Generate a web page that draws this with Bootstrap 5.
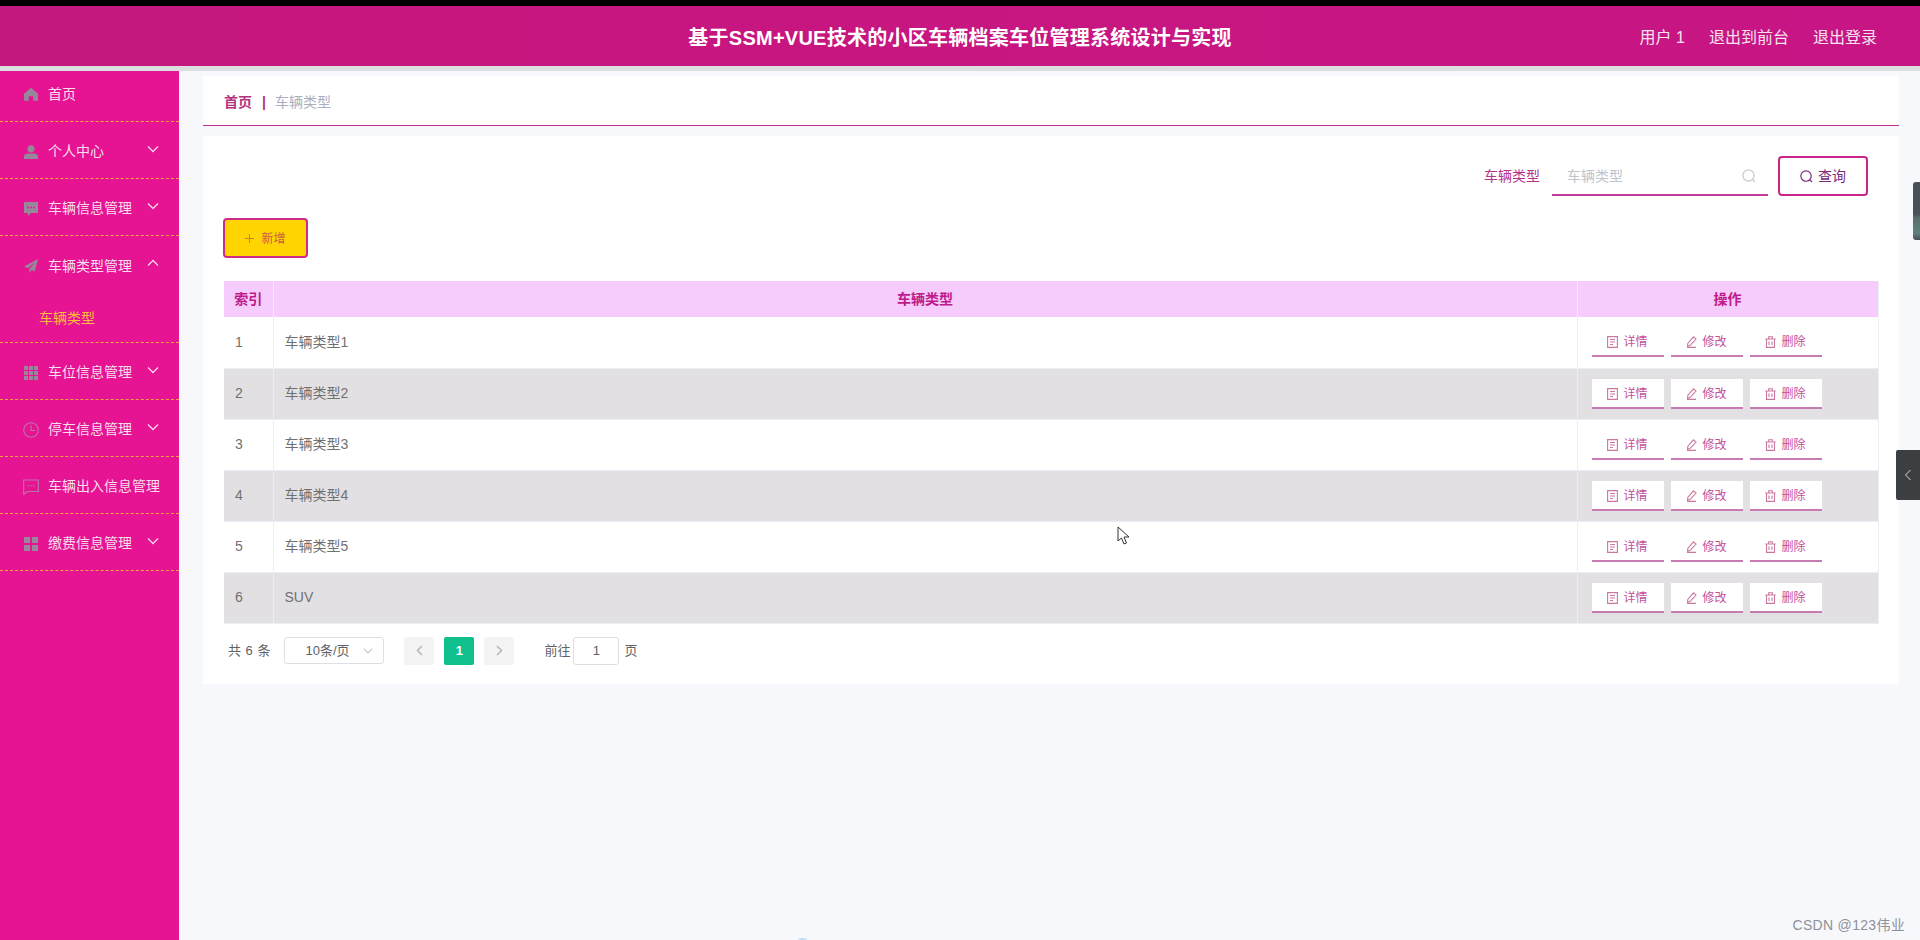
<!DOCTYPE html>
<html lang="zh">
<head>
<meta charset="utf-8">
<title>小区车辆档案车位管理系统</title>
<link href="https://cdn.jsdelivr.net/npm/bootstrap@5.3.0/dist/css/bootstrap.min.css" rel="stylesheet">
<style>
html,body{height:940px;overflow:hidden}
body{background:#f6f8fc;font-family:"Liberation Sans","Noto Sans CJK SC",sans-serif;color:#606266;position:relative}
.top-black{height:6px;background:#000}
.top-head{height:60px;background:linear-gradient(90deg,#c2187e 0,#c8167f 20%,#c71585 100%);color:#fff}
.head-side{flex:1 1 0}
.head-title{font-size:20px;font-weight:700;line-height:1;margin-top:3px;letter-spacing:.25px}
.head-links{gap:24px;font-size:16px;margin-top:3px;color:#f6e3ef;margin-right:43px}
.top-strip{height:5px;background:#dcdddf}
.body-wrap{height:869px}
.side{width:179px;background:#e61392;flex:none}
.side-item{height:57px;border-bottom:1px dashed #f5a53c;padding-left:24px;padding-top:3px;color:#f7dfee;font-size:14px;gap:10px}
.side-item.first{height:51px;padding-top:0;padding-bottom:4px}
.side-item.expanded{border-bottom:0}
.side-item svg.ic{width:14px;height:14px;fill:#96889a;flex:none}
.side-item svg.ic.ln{width:16px;height:16px;margin:0 -1px;fill:none;stroke:#b877ab;stroke-width:1.1}
.side-item .chev{position:relative;top:-3px;width:12px;height:8px;margin-left:auto;margin-right:20px;fill:none;stroke:#f5d5e8;stroke-width:1.3;flex:none}
.side-sub{height:50px;border-bottom:1px dashed #f5a53c;padding-left:39px;padding-top:2px;color:#fbbf3d;font-size:14px}
.main-col{padding:5px 21px 0 24px}
.crumb{height:50px;background:#fff;border-bottom:1px solid #c92c94;padding:3px 21px 0;font-size:14px;margin-bottom:10px}
.crumb b{color:#b3317f;font-weight:700}
.crumb i{font-style:normal;color:#b3317f;margin:0 9px 0 10px;font-weight:700}
.crumb span{color:#a8b0c0}
.panel-box{height:548px;background:#fff;padding:20px 20px 0 20px}
.q-row{height:40px;padding-right:11px;gap:10px}
.q-label{color:#b7338a;font-size:14px;margin-right:2px}
.q-input{width:216px;height:40px;border-bottom:2px solid #c53a98;padding:2px 12px 0 15px;color:#c0c4cc;font-size:14px}
.q-input svg{width:14px;height:14px;fill:none;stroke:#c9ccd3;stroke-width:1.3}
.q-btn{width:90px;height:40px;background:#fff;border:2px solid #c8248a;border-radius:4px;color:#7a2b80;font-size:14px;gap:5px;padding:0;--bs-btn-hover-bg:#fff}
.q-btn svg{width:13px;height:13px;fill:none;stroke:#7a2b80;stroke-width:1.3}
.add-btn{width:85px;height:40px;margin-top:22px;margin-left:0;background:#ffd400;border:2px solid #cc2b8a;border-radius:4px;color:#c8603f;font-size:12px;gap:7px;padding:1px 0 0}
.add-btn svg{width:9px;height:9px;stroke:#b9893b;stroke-width:1;fill:none}
.type-table{width:1654px;margin:23px 0 0 1px;table-layout:fixed;font-size:14px;border-collapse:collapse}
.type-table th{height:36px;padding:0;background:#f5ccfb;color:#bf1a8a;font-weight:700;text-align:center;vertical-align:middle;border:0;border-right:1px solid #ebeef5;font-size:14px}
.type-table td{height:51px;padding:0 11px;background:#fff;color:#707070;vertical-align:middle;border:0;border-bottom:1px solid #ebeef5;border-right:1px solid #ebeef5}
.type-table tbody tr:nth-child(even) td{background:#e3e0e3}
.type-table td.ops{padding:0 0 0 14px}
.op-wrap{gap:7px}
.op-btn{width:72px;height:30px;background:#fff;border:0;border-bottom:2px solid #c87ab2;border-radius:0;color:#c4509c;font-size:12px;gap:5px;padding:2px 0 0}
.op-btn svg{width:11px;height:12px;fill:none;stroke:#c9789f;stroke-width:1.1}
.pager{margin:13px 0 0 5px;height:28px;font-size:13px;color:#606266}
.pg-total{word-spacing:1px}
.pg-select{width:100px;height:27px;border:1px solid #dcdfe6;border-radius:3px;margin-left:14px;padding:0 10px 0 20px;color:#606266}
.pg-select svg{width:10px;height:6px;fill:none;stroke:#c0c4cc;stroke-width:1.1}
.pg-btn{width:30px;height:28px;background:#f4f4f5;border-radius:2px;margin-left:10px}
.pg-btn svg{width:7px;height:11px;fill:none;stroke:#b5b7bc;stroke-width:1.6}
.pg-btn.on{background:#0fc08c;color:#fff;font-weight:700}
.pg-first{margin-left:20px}
.pg-goto{margin-left:30px}
.pg-input{width:46px;height:28px;border:1px solid #dcdfe6;border-radius:3px;margin:0 5px 0 3px}
.fx-strip{position:absolute;right:0;top:182px;width:7px;height:58px;background:linear-gradient(180deg,#4a5058 0,#4a5058 55%,#5a6f6c 62%,#5f827c 88%,#4a5058 100%);border-radius:3px 0 0 3px}
.fx-tab{position:absolute;right:0;top:450px;width:24px;height:50px;background:#3c3f41;border-radius:2px 0 0 2px}
.fx-tab svg{width:8px;height:12px;fill:none;stroke:#dcdcdc;stroke-width:1}
.fx-cursor{position:absolute;left:1117px;top:526px;width:13px;height:19px}
.fx-mark{position:absolute;right:15px;top:914px;font-size:14px;line-height:22px;color:#8f9196;letter-spacing:.3px}
.fx-spot{position:absolute;left:798px;top:938px;width:9px;height:2px;border-radius:50%;background:#c4e0f2}
</style>
</head>
<body>
<div class="top-black"></div>
<header class="top-head d-flex align-items-center">
  <div class="head-side"></div>
  <div class="head-title">基于SSM+VUE技术的小区车辆档案车位管理系统设计与实现</div>
  <div class="head-side"><div class="d-flex justify-content-end head-links"><span>用户 1</span><span>退出到前台</span><span>退出登录</span></div></div>
</header>
<div class="top-strip"></div>
<div class="d-flex body-wrap">
  <aside class="side">
    <div class="side-item first d-flex align-items-center"><svg class="ic" viewBox="0 0 14 14"><path d="M7 .8 0 6.800v7h4.800V9.200h4.400v4.600H14v-7z"/></svg>首页</div>
    <div class="side-item d-flex align-items-center"><svg class="ic" viewBox="0 0 14 14"><circle cx="7" cy="3.800" r="3.600"/><path d="M0 14v-2.400C0 9.400 2 8.400 4 8.400h6c2 0 4 1 4 3.200V14z"/></svg>个人中心<svg class="chev" viewBox="0 0 12 8"><path d="M1 1.500 6 6.500l5-5"/></svg></div>
    <div class="side-item d-flex align-items-center"><svg class="ic" viewBox="0 0 14 14"><path d="M0 0h14v11H7l-3 3v-3H0z"/><g fill="#e61392"><circle cx="4" cy="5.500" r=".9"/><circle cx="7" cy="5.500" r=".9"/><circle cx="10" cy="5.500" r=".9"/></g></svg>车辆信息管理<svg class="chev" viewBox="0 0 12 8"><path d="M1 1.500 6 6.500l5-5"/></svg></div>
    <div class="side-item expanded d-flex align-items-center"><svg class="ic" viewBox="0 0 14 14"><path d="M14 0 0 7.500l3.800 1.800L11.500 3 5.400 10v4l2.300-2.900 3 1.500z"/></svg>车辆类型管理<svg class="chev" viewBox="0 0 12 8"><path d="M1 6.500 6 1.500l5 5"/></svg></div>
    <div class="side-sub d-flex align-items-center">车辆类型</div>
    <div class="side-item d-flex align-items-center"><svg class="ic" viewBox="0 0 14 14"><path d="M0 0h4v4H0zM5 0h4v4H5zM10 0h4v4h-4zM0 5h4v4H0zM5 5h4v4H5zM10 5h4v4h-4zM0 10h4v4H0zM5 10h4v4H5zM10 10h4v4h-4z"/></svg>车位信息管理<svg class="chev" viewBox="0 0 12 8"><path d="M1 1.500 6 6.500l5-5"/></svg></div>
    <div class="side-item d-flex align-items-center"><svg class="ic ln" viewBox="0 0 16 16"><circle cx="8" cy="8" r="7.300"/><path d="M8 3.500v5h4"/></svg>停车信息管理<svg class="chev" viewBox="0 0 12 8"><path d="M1 1.500 6 6.500l5-5"/></svg></div>
    <div class="side-item d-flex align-items-center"><svg class="ic ln" viewBox="0 0 16 16"><path d="M.7 1h14.600v11.500H4.500L.7 15.300z"/><path d="M4.500 6.800h1.200M7.400 6.800h1.200M10.300 6.800h1.200" stroke-width="1.400"/></svg>车辆出入信息管理</div>
    <div class="side-item d-flex align-items-center"><svg class="ic" viewBox="0 0 14 14"><path d="M0 0h6v6H0zM8 0h6v6H8zM0 8h6v6H0zM8 8h6v6H8z"/></svg>缴费信息管理<svg class="chev" viewBox="0 0 12 8"><path d="M1 1.500 6 6.500l5-5"/></svg></div>
  </aside>
  <main class="main-col flex-grow-1">
    <div class="crumb d-flex align-items-center"><b>首页</b><i>|</i><span>车辆类型</span></div>
    <section class="panel-box">
      <div class="q-row d-flex justify-content-end align-items-center">
        <span class="q-label">车辆类型</span>
        <div class="q-input d-flex align-items-center justify-content-between"><span>车辆类型</span><svg viewBox="0 0 14 14"><circle cx="6.500" cy="6.500" r="5.600"/><path d="m10.500 10.500 2.500 2.500"/></svg></div>
        <button class="btn q-btn d-flex align-items-center justify-content-center" type="button"><svg viewBox="0 0 14 14"><circle cx="6.500" cy="6.500" r="5.600"/><path d="m10.500 10.500 2.500 2.500"/></svg>查询</button>
      </div>
      <button class="btn add-btn d-flex align-items-center justify-content-center" type="button"><svg viewBox="0 0 9 9"><path d="M4.500 0v9M0 4.500h9"/></svg>新增</button>
      <table class="table type-table mb-0">
        <colgroup><col style="width:49px"><col style="width:1304px"><col style="width:301px"></colgroup>
        <thead><tr><th>索引</th><th>车辆类型</th><th>操作</th></tr></thead>
        <tbody id="rows"></tbody>
      </table>
      <div class="pager d-flex align-items-center">
        <span class="pg-total">共 6 条</span>
        <div class="pg-select d-flex align-items-center justify-content-between"><span>10条/页</span><svg viewBox="0 0 10 6"><path d="m.7.700 4.300 4.300L9.300.7"/></svg></div>
        <div class="pg-btn pg-first d-flex align-items-center justify-content-center"><svg viewBox="0 0 7 11"><path d="M6 1 1.500 5.500 6 10"/></svg></div>
        <div class="pg-btn on d-flex align-items-center justify-content-center">1</div>
        <div class="pg-btn d-flex align-items-center justify-content-center"><svg viewBox="0 0 7 11"><path d="m1 1 4.500 4.500L1 10"/></svg></div>
        <span class="pg-goto">前往</span>
        <div class="pg-input d-flex align-items-center justify-content-center">1</div>
        <span>页</span>
      </div>
    </section>
  </main>
</div>
<div class="fx-strip"></div>
<div class="fx-tab d-flex align-items-center justify-content-center"><svg viewBox="0 0 8 12"><path d="M6.500 1 1.500 6l5 5"/></svg></div>
<svg class="fx-cursor" viewBox="0 0 13 19"><path d="M1 1v14l3.500-3 2.500 6 2.500-1-2.500-6h5z" fill="#fff" stroke="#333" stroke-width="1"/></svg>
<div class="fx-mark">CSDN @123伟业</div>
<div class="fx-spot"></div>
<script>
var names=['车辆类型1','车辆类型2','车辆类型3','车辆类型4','车辆类型5','SUV'];
var ops='<div class="op-wrap d-flex">'+
'<button class="btn op-btn d-flex align-items-center justify-content-center" type="button"><svg viewBox="0 0 11 12"><path d="M.6.600h9.800v10.800H.6zM3 3.500h5M3 6h5M3 8.500h3"/></svg>详情</button>'+
'<button class="btn op-btn d-flex align-items-center justify-content-center" type="button"><svg viewBox="0 0 11 12"><path d="M7.500.8 10 3 4 9.500 1.500 10l.4-2.800zM1 11.400h9"/></svg>修改</button>'+
'<button class="btn op-btn d-flex align-items-center justify-content-center" type="button"><svg viewBox="0 0 11 12"><path d="M1.500 3v8.400h8V3M.3 3h10.400M3.700 3V.7h3.600V3M4 5.500v3.500M7 5.500v3.500"/></svg>删除</button></div>';
document.getElementById('rows').innerHTML=names.map(function(n,i){return '<tr><td>'+(i+1)+'</td><td>'+n+'</td><td class="ops">'+ops+'</td></tr>';}).join('');
</script>
<script src="https://cdn.jsdelivr.net/npm/bootstrap@5.3.0/dist/js/bootstrap.bundle.min.js"></script>
</body>
</html>
